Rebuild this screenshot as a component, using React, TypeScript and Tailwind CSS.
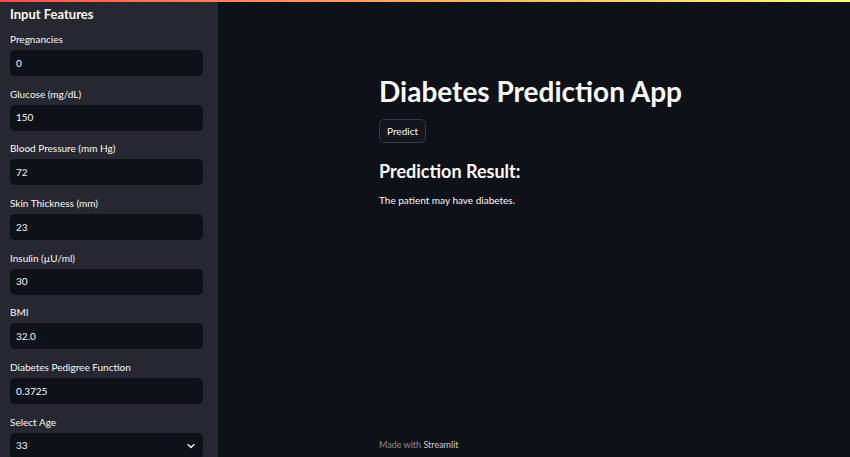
import { ChevronDown } from 'lucide-react';

const fields = [
  { label: 'Pregnancies', value: '0' },
  { label: 'Glucose (mg/dL)', value: '150' },
  { label: 'Blood Pressure (mm Hg)', value: '72' },
  { label: 'Skin Thickness (mm)', value: '23' },
  { label: 'Insulin (µU/ml)', value: '30' },
  { label: 'BMI', value: '32.0' },
  { label: 'Diabetes Pedigree Function', value: '0.3725' },
];

export default function App() {
  return (
    <div className="relative flex h-[457px] w-[850px] overflow-hidden bg-[#0e1117] text-[#fafafa] font-['Lato','Noto_Sans',sans-serif]">
      {/* top decoration line */}
      <div className="absolute left-0 top-0 h-[2px] w-full bg-gradient-to-r from-[#ff4b4b] to-[#fffd80]" />

      <aside className="flex w-[218px] shrink-0 flex-col bg-[#262730] px-[10px] pt-[6px]">
        <h2 className="text-[13px] font-bold leading-[16px]">Input Features</h2>
        <div className="mt-[10px] flex flex-col gap-[10.7px]">
          {fields.map((f) => (
            <div key={f.label} className="flex flex-col">
              <label className="text-[10px] leading-[14px] text-[#fafafa]">{f.label}</label>
              <div className="mt-[4px] flex h-[26px] w-[193px] items-center rounded-[5px] bg-[#0e1117] px-[6px] text-[10px]">
                {f.value}
              </div>
            </div>
          ))}
          <div className="flex flex-col">
            <label className="text-[10px] leading-[14px]">Select Age</label>
            <div className="mt-[4px] flex h-[26px] w-[193px] items-center justify-between rounded-[5px] bg-[#0e1117] px-[6px] text-[10px]">
              <span>33</span>
              <ChevronDown size={12} strokeWidth={2.5} />
            </div>
          </div>
        </div>
      </aside>

      <main className="flex flex-1 flex-col">
        <div className="ml-[161px] mt-[73px] flex w-[320px] flex-col">
          <h1 className="text-[28px] font-bold leading-[36px]">Diabetes Prediction App</h1>
          <button className="mt-[10px] h-[24px] w-[47px] rounded-[5px] border border-[#3a3b44] bg-[#13161e] text-[10px]">
            Predict
          </button>
          <h3 className="mt-[16px] text-[18px] font-bold leading-[24px]">Prediction Result:</h3>
          <p className="mt-[10px] text-[10px] leading-[14px]">The patient may have diabetes.</p>
        </div>
        <div className="mt-auto mb-[6px] ml-[161px] text-[9px] text-[#8b8d93]">
          Made with <span className="text-[#c9cacd]">Streamlit</span>
        </div>
      </main>
    </div>
  );
}
